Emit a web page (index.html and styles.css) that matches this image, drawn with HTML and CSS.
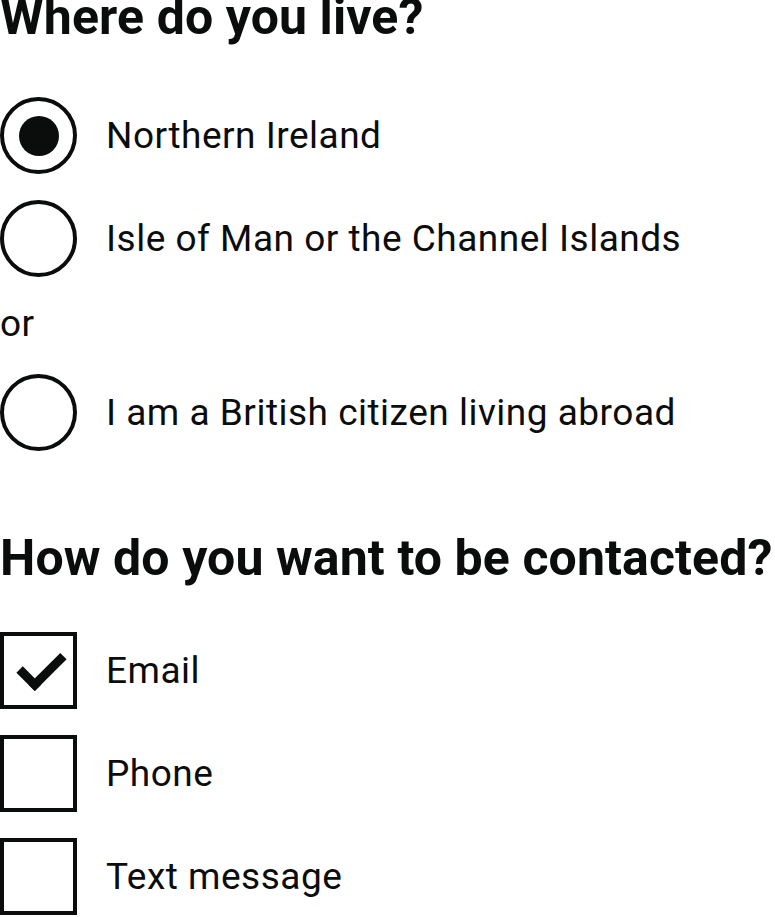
FILE: index.html
```html
<!DOCTYPE html>
<html lang="en">
<head>
<meta charset="utf-8">
<title>Form</title>
<link rel="stylesheet" href="styles.css">
</head>
<body>
<form class="form">
  <fieldset class="fieldset fieldset-live">
    <legend class="legend">Where do you live?</legend>
    <div class="options">
      <label class="option">
        <input class="radio" type="radio" name="live" checked>
        <span class="label">Northern Ireland</span>
      </label>
      <label class="option">
        <input class="radio" type="radio" name="live">
        <span class="label">Isle of Man or the Channel Islands</span>
      </label>
      <div class="divider">or</div>
      <label class="option">
        <input class="radio" type="radio" name="live">
        <span class="label">I am a British citizen living abroad</span>
      </label>
    </div>
  </fieldset>
  <fieldset class="fieldset fieldset-contact">
    <legend class="legend">How do you want to be contacted?</legend>
    <div class="options">
      <label class="option">
        <input class="checkbox" type="checkbox" name="contact" checked>
        <span class="label">Email</span>
      </label>
      <label class="option">
        <input class="checkbox" type="checkbox" name="contact">
        <span class="label">Phone</span>
      </label>
      <label class="option">
        <input class="checkbox" type="checkbox" name="contact">
        <span class="label">Text message</span>
      </label>
    </div>
  </fieldset>
</form>
</body>
</html>
```
FILE: styles.css
```css
html, body {
  margin: 0;
  padding: 0;
  background: #ffffff;
}
body {
  font-family: Roboto, "Liberation Sans", sans-serif;
  color: #0b0c0c;
  overflow: hidden;
}
.form {
  display: flex;
  flex-direction: column;
}
.fieldset {
  border: 0;
  margin: 0;
  padding: 0;
  min-width: 0;
  display: flex;
  flex-direction: column;
}
.fieldset-live {
  margin-top: -8px;
}
.fieldset-contact {
  margin-top: 82px;
}
.legend {
  padding: 0;
  font-weight: 700;
  font-size: 50px;
  letter-spacing: 0.1px;
  line-height: 51px;
  float: left;
  width: 100%;
  white-space: nowrap;
}
.options {
  clear: both;
  display: flex;
  flex-direction: column;
  gap: 26px;
  padding-top: 54px;
}
.fieldset-contact .options {
  padding-top: 48px;
}
.option {
  display: flex;
  align-items: center;
  gap: 29px;
  height: 77px;
}
.label {
  font-size: 37px;
  letter-spacing: 0.5px;
  line-height: 36px;
  white-space: nowrap;
}
.radio, .checkbox {
  appearance: none;
  -webkit-appearance: none;
  margin: 0;
  flex: 0 0 77px;
  width: 77px;
  height: 77px;
  border: 4px solid #0b0c0c;
  background: #fff;
  position: relative;
  box-sizing: border-box;
}
.radio {
  border-radius: 50%;
}
.radio:checked::after {
  content: "";
  position: absolute;
  left: 14.5px;
  top: 14.5px;
  width: 40px;
  height: 40px;
  border-radius: 50%;
  background: #0b0c0c;
}
.checkbox:checked::after {
  content: "";
  position: absolute;
  left: 15px;
  top: 17px;
  width: 36px;
  height: 17px;
  border: solid #0b0c0c;
  border-width: 0 0 9px 9px;
  transform: rotate(-45deg);
}
.divider {
  font-size: 37px;
  letter-spacing: 0.5px;
  line-height: 36px;
  margin: 3px 0 6px;
}
```
